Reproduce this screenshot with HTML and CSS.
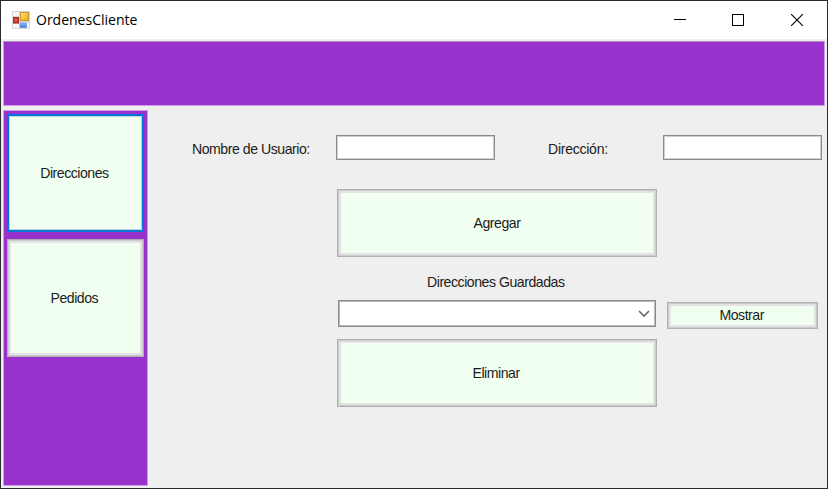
FILE: index.html
```html
<!DOCTYPE html>
<html lang="es">
<head>
<meta charset="utf-8">
<title>OrdenesCliente</title>
<link rel="stylesheet" href="styles.css">
</head>
<body>
<div class="window">
  <header class="titlebar">
    <svg class="app-icon" width="18" height="18" viewBox="0 0 18 18">
      <defs>
        <linearGradient id="gold" x1="0" y1="0" x2="1" y2="1"><stop offset="0" stop-color="#ffe68a"/><stop offset="1" stop-color="#e9a90a"/></linearGradient>
        <linearGradient id="blue" x1="0" y1="0" x2="0" y2="1"><stop offset="0" stop-color="#8dbcf8"/><stop offset="1" stop-color="#3b78dc"/></linearGradient>
      </defs>
      <rect x="0" y="0" width="18" height="18" rx="1" fill="#d6d6d6"/>
      <path d="M1 1h6v4H1zM1 13h6v4H1zM15 12h2v5h-2z" fill="#f7f7f7"/>
      <rect x="1" y="6" width="6" height="6.5" fill="#b92a24"/>
      <rect x="2.5" y="7.5" width="2.5" height="3" fill="#dd6660"/>
      <rect x="8.5" y="1.5" width="8" height="8" fill="url(#gold)" stroke="#c8961c"/>
      <rect x="8" y="12" width="6.5" height="4.5" fill="url(#blue)" stroke="#5b8fdc" stroke-width=".6"/>
    </svg>
    <span class="title">OrdenesCliente</span>
    <div class="controls">
      <svg width="12" height="12" viewBox="0 0 12 12"><path d="M0 5.5h12" stroke="#000"/></svg>
      <svg width="12" height="12" viewBox="0 0 12 12"><rect x=".5" y=".5" width="11" height="11" fill="none" stroke="#000"/></svg>
      <svg width="12" height="12" viewBox="0 0 12 12"><path d="M0 0l12 12M12 0L0 12" stroke="#000" stroke-width="1.1"/></svg>
    </div>
  </header>
  <div class="banner"></div>
  <div class="body">
    <nav class="sidebar">
      <button class="btn focused"><span class="text">Direcciones</span></button>
      <button class="btn"><span class="text">Pedidos</span></button>
    </nav>
    <main class="form">
      <div class="fields">
        <label class="text name-label" for="user">Nombre de Usuario:</label>
        <input class="field" id="user">
        <label class="text address-label" for="address">Dirección:</label>
        <input class="field" id="address">
      </div>
      <button class="btn wide"><span class="text">Agregar</span></button>
      <div class="saved-label"><span class="text">Direcciones Guardadas</span></div>
      <div class="saved">
        <div class="combo"><svg width="12" height="8" viewBox="0 0 12 8"><path d="M1 1l5 5 5-5" fill="none" stroke="#666" stroke-width="1.6"/></svg></div>
        <button class="btn show"><span class="text">Mostrar</span></button>
      </div>
      <button class="btn wide"><span class="text">Eliminar</span></button>
    </main>
  </div>
</div>
</body>
</html>
```

FILE: styles.css
```css
* { box-sizing: border-box; }
body { margin: 0; }
.window {
  width: 828px;
  height: 489px;
  border: 1px solid #2b2b2d;
  background: #efefef;
  overflow: hidden;
}
.titlebar {
  display: flex;
  align-items: center;
  height: 38px;
  padding: 0 24px 0 11px;
  background: #fff;
}
.app-icon { display: block; }
.title {
  margin-left: 6px;
  font: 14px/20px "Open Sans", sans-serif;
  color: #000;
}
.controls { display: flex; gap: 46px; margin-left: auto; }
.controls svg { display: block; }
.controls svg:last-child { margin-left: 1px; }
.banner {
  height: 65px;
  margin: 2px 2px 0;
  border: 1px solid #d19be8;
  border-top-color: #b58ac8;
  background: #9932cc;
}
.body { display: flex; margin: 4px 0 0 2px; }
.sidebar {
  display: flex;
  flex-direction: column;
  gap: 7px;
  width: 145px;
  height: 376px;
  padding: 3px 3px 0;
  border: 1px solid #d19be8;
  background: #9932cc;
}
.btn {
  display: flex;
  align-items: center;
  justify-content: center;
  margin: 0;
  padding: 0;
  border: 1px solid #b0b0b0;
  background: #f0fff0;
  box-shadow: inset 0 0 0 1px #cacaca, inset 0 0 0 3px #e3e3e3;
}
.sidebar .btn { width: 137px; height: 118px; }
.btn.focused {
  border: 2px solid #0078d7;
  box-shadow: inset 0 0 0 1px #c4d4df;
}
.text {
  display: inline-block;
  font: 15px/18px "Liberation Sans", sans-serif;
  letter-spacing: -0.5px;
  color: #1c1c1c;
  white-space: nowrap;
  transform: scaleX(0.94);
}
.form { width: 680px; padding: 25px 0 0 44px; }
.fields { display: flex; align-items: center; }
.fields .text, .saved-label .text { transform-origin: left; }
.name-label { width: 144px; padding-top: 2px; }
.field {
  width: 159px;
  height: 25px;
  padding: 0 4px;
  border: 1px solid #8c8c8c;
  background: #fff;
  box-shadow: inset 0 0 0 1px #cfcfcf;
}
.address-label { width: 115px; margin-left: 53px; padding-top: 2px; letter-spacing: -0.3px; }
.wide { width: 320px; height: 68px; margin-left: 145px; }
.wide .text { margin-left: -1px; }
.fields + .wide { margin-top: 29px; }
.saved-label { width: 138px; height: 18px; margin: 16px 0 0 235px; }
.saved { display: flex; align-items: flex-end; margin: 9px 0 10px 146px; }
.combo {
  display: flex;
  align-items: center;
  justify-content: flex-end;
  width: 318px;
  height: 27px;
  margin-bottom: 2px;
  padding-right: 5px;
  border: 1px solid #8c8c8c;
  background: #fff;
  box-shadow: inset 0 0 0 1px #b8b8b8;
}
.show { width: 151px; height: 27px; margin-left: 11px; }
.show .text { margin: -2px 0 0 -2px; }
.sidebar .text { margin-left: -3px; }
```
